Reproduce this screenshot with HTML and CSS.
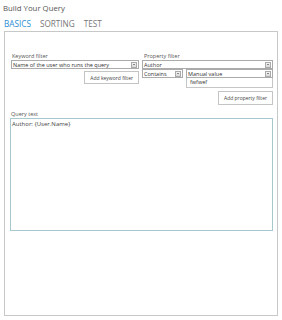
FILE: index.html
```html
<!DOCTYPE html>
<html>
<head>
    <title>Build Your Query</title>
    <link rel="stylesheet" href="styles.css">
</head>
<body>
    <h1 class="title">Build Your Query</h1>
    <nav class="tabs">
        <span class="tab active">BASICS</span>
        <span class="tab">SORTING</span>
        <span class="tab">TEST</span>
    </nav>
    <div class="panel">
        <div class="filters">
            <div class="filter keyword">
                <div class="label">Keyword filter</div>
                <div class="select">
                    <span class="value">Name of the user who runs the query</span>
                    <span class="arrow"></span>
                </div>
                <div class="actions">
                    <button class="btn">Add keyword filter</button>
                </div>
            </div>
            <div class="filter property">
                <div class="label">Property filter</div>
                <div class="select">
                    <span class="value">Author</span>
                    <span class="arrow"></span>
                </div>
                <div class="pair">
                    <div class="select small">
                        <span class="value">Contains</span>
                        <span class="arrow"></span>
                    </div>
                    <div class="stack">
                        <div class="select">
                            <span class="value">Manual value</span>
                            <span class="arrow"></span>
                        </div>
                        <div class="input">fwfwef</div>
                    </div>
                </div>
                <div class="actions">
                    <button class="btn">Add property filter</button>
                </div>
            </div>
        </div>
        <div class="query">
            <div class="label">Query text</div>
            <div class="textarea">Author: {User.Name}</div>
        </div>
    </div>
</body>
</html>
```

FILE: styles.css
```css
body {
    font-family: 'Open Sans', 'Liberation Sans', sans-serif;
    margin: 0;
    padding: 3px 4px 4px 4px;
    background-color: #ffffff;
    color: #444;
}

.title {
    font-size: 7.8px;
    font-weight: normal;
    color: #555;
    margin: 0 0 0 -1px;
    line-height: 11px;
}

.tabs {
    display: flex;
    gap: 9px;
    margin-top: 4px;
    height: 13px;
    font-size: 8.2px;
    line-height: 11px;
    color: #777;
}

.tab.active {
    color: #2a8dd4;
}

.panel {
    height: 285px;
    border: 1px solid #c8c8c8;
    padding: 20px 4px 0 5px;
    box-sizing: border-box;
}

.filters {
    display: grid;
    grid-template-columns: 128px 131px;
    gap: 3px;
    padding-left: 1px;
}

.label {
    font-size: 5.5px;
    line-height: 8px;
    color: #555;
    padding-left: 1px;
}

.property .label {
    padding-left: 2px;
}

.select {
    display: flex;
    align-items: center;
    height: 9px;
    border: 1px solid #ababab;
    box-sizing: border-box;
    font-size: 5.5px;
    color: #333;
    background: #fff;
}

.select .value {
    flex: 1;
    padding-left: 1px;
    white-space: nowrap;
    overflow: hidden;
}

.select .arrow {
    width: 6px;
    height: 6px;
    margin-right: 1px;
    border: 1px solid #aaa;
    box-sizing: border-box;
    background: linear-gradient(#f4f4f4, #d8d8d8);
    position: relative;
}

.select .arrow::after {
    content: '';
    position: absolute;
    left: 1px;
    top: 1.5px;
    border-left: 1px solid transparent;
    border-right: 1px solid transparent;
    border-top: 1.5px solid #222;
}

.pair {
    display: flex;
    gap: 3px;
}

.select.small {
    width: 41px;
}

.stack {
    flex: 1;
}

.input {
    height: 10px;
    border: 1px solid #c6c6c6;
    border-top: none;
    box-sizing: border-box;
    font-size: 5.5px;
    line-height: 9px;
    padding-left: 3px;
    color: #333;
}

.actions {
    display: flex;
    justify-content: flex-end;
    margin-top: 2px;
}

.btn {
    font-family: 'Open Sans', 'Liberation Sans', sans-serif;
    font-size: 5px;
    color: #444;
    background: #fff;
    border: 1px solid #c4c4c4;
    height: 13px;
    padding: 0 5px;
    margin: 0;
}

.property .actions .btn {
    height: 14px;
    margin-top: 1px;
}

.query {
    margin-top: 5px;
}

.textarea {
    height: 113px;
    border: 1px solid #a8c8cf;
    box-sizing: border-box;
    font-size: 6px;
    line-height: 8px;
    padding: 1px 1px;
    color: #444;
}
```
